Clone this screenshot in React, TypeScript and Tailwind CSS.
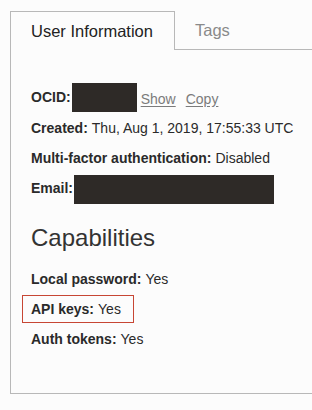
const rows = [
  { label: 'Created:', value: 'Thu, Aug 1, 2019, 17:55:33 UTC' },
  { label: 'Multi-factor authentication:', value: 'Disabled' },
];

const capabilities = [
  { label: 'Local password:', value: 'Yes', marked: false },
  { label: 'API keys:', value: 'Yes', marked: true },
  { label: 'Auth tokens:', value: 'Yes', marked: false },
];

export default function App() {
  return (
    <div
      className="w-[312px] h-[410px] overflow-hidden bg-[#fcfcfc] pt-[11px] pl-[10px] text-[#2a2a2a]"
      style={{ fontFamily: '"Liberation Sans", Arial, sans-serif' }}
    >
      <div className="w-[340px]">
        {/* Tabs */}
        <div className="flex h-[39px]">
          <div className="w-[165px] border border-b-0 border-[#b8b8b8] pl-[20px] flex items-center text-[16.5px] text-[#222]">
            User Information
          </div>
          <div className="flex-1 border-b border-[#b8b8b8] pl-[20px] flex items-center text-[16.5px] text-[#8a8a8a]">
            Tags
          </div>
        </div>

        {/* Panel */}
        <div className="h-[344px] border border-t-0 border-[#b8b8b8] pl-[20px] pt-[32px] text-[14px]">
          <div className="h-[30px] flex items-center">
            <span className="font-bold">OCID:</span>
            <span className="ml-[1px] w-[65px] h-[29px] bg-[#2e2a27]" />
            <a className="ml-[4px] mt-[4px] text-[#7b7b7b] underline underline-offset-2">Show</a>
            <a className="ml-[10px] mt-[4px] text-[#7b7b7b] underline underline-offset-2">Copy</a>
          </div>
          <div className="pt-[1px]">
            {rows.map((r) => (
              <div key={r.label} className="h-[30px] flex items-center">
                <span className="font-bold">{r.label}</span>
                <span className="ml-[4px]">{r.value}</span>
              </div>
            ))}
            <div className="h-[30px] flex items-center">
              <span className="font-bold">Email:</span>
              <span className="ml-[1px] mt-[3px] w-[200px] h-[29px] bg-[#2e2a27]" />
            </div>
          </div>

          <h2 className="mt-[20px] text-[24px] leading-[30px] text-[#333]">Capabilities</h2>

          <div className="mt-[11px]">
            {capabilities.map((c) => (
              <div key={c.label} className="h-[30px] flex items-center">
                <div
                  className={
                    c.marked
                      ? '-ml-[9px] h-[28px] pl-[8px] pr-[12px] flex items-center border border-[#c74634]'
                      : 'flex items-center'
                  }
                >
                  <span className="font-bold">{c.label}</span>
                  <span className="ml-[4px]">{c.value}</span>
                </div>
              </div>
            ))}
          </div>
        </div>
      </div>
    </div>
  );
}
